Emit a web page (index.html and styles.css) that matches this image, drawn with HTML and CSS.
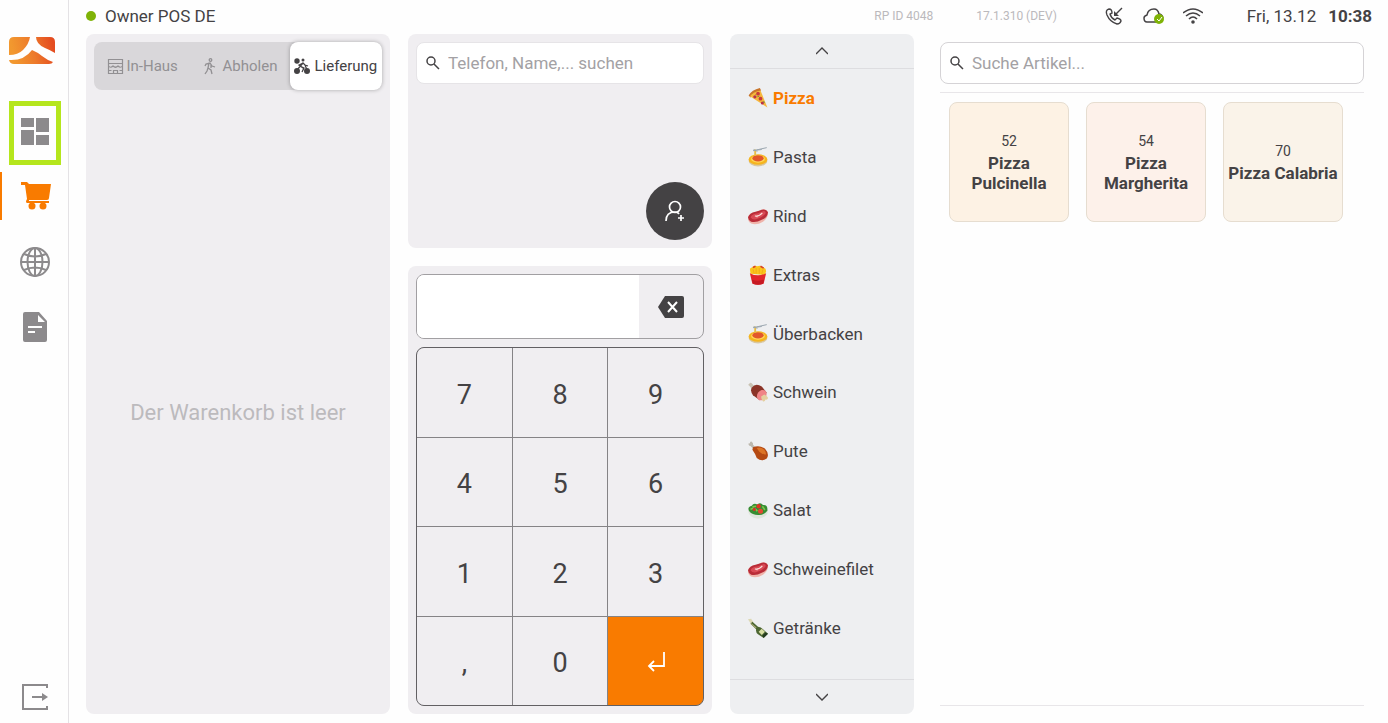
FILE: index.html
```html
<!DOCTYPE html>
<html lang="de">
<head>
    <meta charset="UTF-8">
    <title>Owner POS DE</title>
    <meta name="viewport" content="width=device-width, initial-scale=1.0">
    <link rel="stylesheet" href="styles.css">
</head>
<body>
    <!-- food icons used by the category list -->
    <svg class="sprite" aria-hidden="true">
        <symbol id="pizza" viewBox="0 0 32 32">
            <path d="M1 12Q6 3 19 0l2 4Q10 8 4 15z" fill="#c8742a"/>
            <path d="M3 13Q9 6 20 4l11 27z" fill="#f6b73c"/>
            <circle cx="16" cy="9" r="3" fill="#c93a3a"/>
            <circle cx="11" cy="14" r="2.600" fill="#b9304a"/>
            <circle cx="20" cy="17" r="3" fill="#c93a3a"/>
            <circle cx="23" cy="24" r="2.500" fill="#b9304a"/>
            <path d="M15 14l3-1M12 10l1 1M25 21l1 3" stroke="#6e8b3a" stroke-width="1.500"/>
        </symbol>
        <symbol id="pasta" viewBox="0 0 32 32">
            <ellipse cx="16" cy="22" rx="15" ry="9" fill="#d9c7a0"/>
            <ellipse cx="16" cy="20" rx="15" ry="8.500" fill="#f5b51f"/>
            <ellipse cx="16" cy="19" rx="11" ry="6" fill="#ffd75a"/>
            <ellipse cx="16" cy="18" rx="9" ry="5" fill="#e2572b"/>
            <path d="M10 14V4h3v10" fill="#e6bd4a"/>
            <path d="M8 6l22-5M9 4l6 3M14 5l8-1" stroke="#9ba7b0" stroke-width="1.600" fill="none"/>
        </symbol>
        <symbol id="steak" viewBox="0 0 32 32">
            <path d="M0 19Q0 12 12 10Q17 9 21 6Q29 3 32 9Q33 19 24 25Q14 31 5 28Q0 25 0 19z" fill="#efb4ab"/>
            <path d="M0 18Q2 11 12 9Q18 8 22 6Q29 4 32 10Q31 19 22 22Q13 27 5 25Q0 22 0 18z" fill="#b92c38"/>
            <path d="M4 18Q7 12 15 12Q20 10 25 8Q29 8 28 12Q24 18 16 20Q8 24 4 18z" fill="#d94a55"/>
            <path d="M11 16Q18 17 23 11M16 15l-2 3" stroke="#fbe0db" stroke-width="1.800" fill="none"/>
        </symbol>
        <symbol id="fries" viewBox="0 0 32 32">
            <path d="M4 14L3 6l4-3 4-2 4 1 4-1 5 2 4 3 1 4-2 6z" fill="#fbc51b"/>
            <path d="M8 4l4-2M20 2l5 3" stroke="#d8402a" stroke-width="2.500"/>
            <path d="M8 7l2 7M13 5v9M18 5v9M24 7l-2 7" stroke="#f0a318" stroke-width="1.200"/>
            <path d="M3 13q13 7 26 0l-4 17q-9 3-18 0z" fill="#e3262b"/>
            <path d="M6 23q10 4 20 0l-2 7q-8 3-16 0z" fill="#c61a23"/>
        </symbol>
        <symbol id="ham" viewBox="0 0 32 32">
            <path d="M2 6q-3-2 0-3q1-3 4-1l5 6-4 4z" fill="#c9c2b3"/>
            <path d="M6 9Q12 1 22 7L30 17L19 29L8 21Q3 14 6 9z" fill="#8b3428"/>
            <ellipse cx="22" cy="21" rx="7" ry="9" transform="rotate(36 22 21)" fill="#f08487"/>
            <path d="M21 23l5-3q6 3 6 6q-1 3-4 2q-1 4-4 3q-3-3-3-8z" fill="#e4cf9f"/>
        </symbol>
        <symbol id="poultry" viewBox="0 0 32 32">
            <path d="M1 6Q0 3 3 4Q3 0 6 1q3 2 2 5l5 5-3 3-6-6q-2 0-3-2z" fill="#bcb8ae"/>
            <path d="M8 10Q18 6 27 12Q35 21 30 28Q22 34 14 27Q12 21 7 14z" fill="#b54a13"/>
            <path d="M14 11Q21 9 26 14Q30 19 28 22Q22 20 18 17z" fill="#dc7426"/>
        </symbol>
        <symbol id="salad" viewBox="0 0 32 32">
            <path d="M0 16h32q0 12-16 14Q0 28 0 16z" fill="#dfe5dc"/>
            <path d="M2 18Q-2 11 6 9Q9 4 15 7Q20 3 24 8Q32 7 31 17Q25 25 16 24Q7 24 2 18z" fill="#368d32"/>
            <path d="M4 15q6-4 11 3M23 10l4 6M7 11l6-1" stroke="#80c34b" stroke-width="2.500" fill="none"/>
            <circle cx="17" cy="10" r="3.500" fill="#df3424"/>
            <circle cx="20" cy="18" r="4" fill="#e44832"/>
            <circle cx="10" cy="15" r="2.500" fill="#cf3427"/>
        </symbol>
        <symbol id="bottle" viewBox="0 0 32 32">
            <path d="M0 2l5-1 4 6-4 3z" fill="#dcd8b4"/>
            <path d="M4 9l3-3 9 8q5 0 8 4l8 7-7 7-9-6q-4-3-3-8z" fill="#4c6632"/>
            <path d="M17 22l5-5 5 5-5 5z" fill="#d9dfa4"/>
            <path d="M23 28l5-5 4 2-7 7z" fill="#243a20"/>
            <path d="M5 9l8 7" stroke="#a5a873" stroke-width="2"/>
        </symbol>
    </svg>

    <nav class="sidebar">
        <svg class="logo" viewBox="0 0 46 27" aria-hidden="true">
            <defs>
                <linearGradient id="sun" gradientUnits="userSpaceOnUse" x1="4" y1="16" x2="44" y2="8">
                    <stop offset="0" stop-color="#f2982f"/>
                    <stop offset="0.500" stop-color="#ed7a2b"/>
                    <stop offset="1" stop-color="#e44c20"/>
                </linearGradient>
            </defs>
            <g fill="url(#sun)">
                <path d="M5 0h16Q20 7 14 13Q9 18 0 18V5Q0 0 5 0z"/>
                <path d="M27 0h14q5 0 5 5v11Q41 13 36 11Q27 7 27 0z"/>
                <path d="M0 23Q15 24 23 13Q28 15 33 19Q38 23 44 25Q43 27 40 27H5Q1 27 0 23z"/>
            </g>
        </svg>
        <button class="nav-item marked" aria-label="Übersicht">
            <svg width="28" height="27" viewBox="0 0 28 27"><path d="M0 0h13v9H0zM15 0h13v14H15zM0 12h13v15H0zM15 17h13v10H15z"/></svg>
        </button>
        <button class="nav-item active" aria-label="Warenkorb">
            <svg width="30" height="28" viewBox="0 0 30 28"><path d="M0 0h6l2 2h22l-2 14q0 2-2 2H8v1h20v2H6q-2-1 0-4L4 3H0z"/><circle cx="11" cy="24" r="3.500"/><circle cx="22" cy="24" r="3.500"/></svg>
        </button>
        <button class="nav-item" aria-label="Online">
            <svg class="line" width="30" height="30" viewBox="0 0 30 30" stroke-width="2"><circle cx="15" cy="15" r="14"/><ellipse cx="15" cy="15" rx="7.500" ry="14"/><path d="M15 1v28M1 15h28M4 7q11 5 22 0M4 23q11-5 22 0"/></svg>
        </button>
        <button class="nav-item" aria-label="Belege">
            <svg width="24" height="30" viewBox="0 0 24 30"><path fill-rule="evenodd" d="M2 0h14l8 9v19q0 2-2 2H2q-2 0-2-2V2q0-2 2-2zM15 3v7h7zM5 14v2h14v-2zM5 19v2h7v-2z"/></svg>
        </button>
        <button class="nav-item logout" aria-label="Abmelden">
            <svg class="line" width="26" height="26" viewBox="0 0 26 26" stroke-width="2"><path d="M25 4V1H1v24h24v-3M10 13h14"/><path d="M20 9l6 4-6 4z" fill="#8c8a8c" stroke="none"/></svg>
        </button>
    </nav>

    <div class="page">
        <header class="topbar">
            <span class="status-dot"></span>
            <span class="shop">Owner POS DE</span>
            <span class="meta">RP ID 4048</span>
            <span class="meta version">17.1.310 (DEV)</span>
            <svg class="line top-icon" width="18" height="18" viewBox="0 0 18 18" stroke-width="1.400"><path d="M4 2Q0 3 2 8Q5 15 12 17Q15 17 16 14Q16 12 12 11L10 13Q6 11 5 7L7 6Q7 2 4 2zM17 1l-7 7"/><path d="M9 9V4l5 5z" fill="#444244" stroke="none"/></svg>
            <svg class="top-icon cloud" width="22" height="16" viewBox="0 0 22 16"><path d="M13 14H4Q1 14 1 10Q1 8 4 7Q5 1 11 1Q15 1 16 6Q19 6 20 10" fill="none" stroke="#444244" stroke-width="1.500"/><circle cx="16" cy="11" r="5" fill="#7fb307"/><path d="M14 11l2 2 3-4" fill="none" stroke="#fff"/></svg>
            <svg class="line top-icon" width="20" height="16" viewBox="0 0 20 16" stroke-width="1.600"><path d="M0 5Q10-3 20 5M3 8Q10 2 17 8M6 11Q10 7 14 11"/><circle cx="10" cy="14" r="1" fill="#444244"/></svg>
            <span class="date">Fri, 13.12</span>
            <span class="time">10:38</span>
        </header>

        <main class="columns">
            <section class="panel basket">
                <div class="order-types">
                    <button class="order-type">
                        <svg class="line" width="17" height="17" viewBox="0 0 17 17" stroke-width="1.200"><path d="M1.500 1.500h14v4h-14zM1.500 5.500v10h14v-10M1.500 8q2 2.500 4.500 0q2.500 2.500 5 0q2.500 2.500 4.500 0M6.500 15.500v-3h4v3M1.500 12.500h3M12.500 12.500h3"/></svg>
                        In-Haus
                    </button>
                    <button class="order-type pickup">
                        <svg class="line" width="12" height="17" viewBox="0 0 12 17" stroke-width="1.300"><circle cx="6.500" cy="2" r="1.300"/><path d="M1 8l1-2 4-1 2 3 3 1M5 5l-1 5 3 2 1 4M4 10l-1 3-2 3M7 6v4"/></svg>
                        Abholen
                    </button>
                    <button class="order-type selected">
                        <svg width="16" height="16" viewBox="0 0 16 16"><circle cx="3" cy="3" r="2.700"/><circle cx="3" cy="13" r="3"/><circle cx="13" cy="13" r="3"/><circle cx="9" cy="2" r="1.500"/><path d="M3 12l6-7 2 2 3 1M6 8l4 2-2 4M9 5L5 7l4 3M11 7l2 5" fill="none" stroke="#444244" stroke-width="1.300"/></svg>
                        Lieferung
                    </button>
                </div>
                <p class="empty">Der Warenkorb ist leer</p>
            </section>

            <div class="middle">
                <section class="panel customer">
                    <label class="search">
                        <svg class="line" width="14" height="14" viewBox="0 0 14 14" stroke-width="1.500"><circle cx="5" cy="5" r="4"/><path d="M8 8l5 5"/></svg>
                        <input type="search" placeholder="Telefon, Name,... suchen" aria-label="Kunde suchen">
                    </label>
                    <button class="add-customer" aria-label="Kunde anlegen">
                        <svg width="20" height="22" viewBox="0 0 20 22"><path d="M1 21Q1 12 10 12Q13 12 14 14M16 15v6M13 18h6" fill="none" stroke="#fff" stroke-width="1.700"/><circle cx="10" cy="7" r="5.500" fill="none" stroke="#fff" stroke-width="1.700"/></svg>
                    </button>
                </section>

                <section class="panel numpad">
                    <div class="display">
                        <input type="text" aria-label="Eingabe">
                        <button aria-label="Löschen">
                            <svg width="26" height="22" viewBox="0 0 26 22"><path d="M7 0h17q2 0 2 2v18q0 2-2 2H7L0 11z"/><path d="M10 6l9 10M19 6l-9 10" stroke="#fff" stroke-width="2"/></svg>
                        </button>
                    </div>
                    <div class="keys">
                        <button>7</button>
                        <button>8</button>
                        <button>9</button>
                        <button>4</button>
                        <button>5</button>
                        <button>6</button>
                        <button>1</button>
                        <button>2</button>
                        <button>3</button>
                        <button>,</button>
                        <button>0</button>
                        <button class="enter" aria-label="Enter">
                            <svg width="18" height="20" viewBox="0 0 18 20"><path d="M17 0v14H2M7 9l-5 5 5 5" fill="none" stroke="#fff" stroke-width="1.800"/></svg>
                        </button>
                    </div>
                </section>
            </div>

            <section class="panel categories">
                <button class="scroll" aria-label="Nach oben">
                    <svg class="line" width="12" height="8" viewBox="0 0 12 8" stroke-width="1.400"><path d="M0 7l6-6 6 6"/></svg>
                </button>
                <ul>
                    <li><button class="category current"><svg><use href="#pizza"/></svg>Pizza</button></li>
                    <li><button class="category"><svg><use href="#pasta"/></svg>Pasta</button></li>
                    <li><button class="category"><svg><use href="#steak"/></svg>Rind</button></li>
                    <li><button class="category"><svg><use href="#fries"/></svg>Extras</button></li>
                    <li><button class="category"><svg><use href="#pasta"/></svg>Überbacken</button></li>
                    <li><button class="category"><svg><use href="#ham"/></svg>Schwein</button></li>
                    <li><button class="category"><svg><use href="#poultry"/></svg>Pute</button></li>
                    <li><button class="category"><svg><use href="#salad"/></svg>Salat</button></li>
                    <li><button class="category"><svg><use href="#steak"/></svg>Schweinefilet</button></li>
                    <li><button class="category"><svg><use href="#bottle"/></svg>Getränke</button></li>
                </ul>
                <button class="scroll" aria-label="Nach unten">
                    <svg class="line" width="12" height="8" viewBox="0 0 12 8" stroke-width="1.400"><path d="M0 1l6 6 6-6"/></svg>
                </button>
            </section>

            <section class="articles">
                <label class="search outlined">
                    <svg class="line" width="14" height="14" viewBox="0 0 14 14" stroke-width="1.500"><circle cx="5" cy="5" r="4"/><path d="M8 8l5 5"/></svg>
                    <input type="search" placeholder="Suche Artikel..." aria-label="Artikel suchen">
                </label>
                <div class="article-list">
                    <button class="article"><span>52</span><strong>Pizza Pulcinella</strong></button>
                    <button class="article rose"><span>54</span><strong>Pizza Margherita</strong></button>
                    <button class="article sand"><span>70</span><strong>Pizza Calabria</strong></button>
                </div>
            </section>
        </main>
    </div>
</body>
</html>
```
FILE: styles.css
```css
* {
    box-sizing: border-box;
}

body {
    margin: 0;
    min-height: 100vh;
    display: flex;
    background-color: #fefefe;
    color: #444244;
    font-family: Roboto, "Liberation Sans", sans-serif;
    font-size: 17px;
}

button, input {
    font: inherit;
    color: inherit;
    margin: 0;
    padding: 0;
    border: none;
    background: none;
}

button {
    cursor: pointer;
}

svg {
    flex: none;
    fill: #444244;
}

.line {
    fill: none;
    stroke: #444244;
}

.sprite {
    position: absolute;
    width: 0;
    height: 0;
}

/* sidebar */
.sidebar {
    width: 69px;
    flex: none;
    display: flex;
    flex-direction: column;
    gap: 1px;
    padding: 37px 0 0;
    border-right: 1px solid #e4e2e5;
}

.logo {
    width: 46px;
    height: 27px;
    margin: 0 0 36px 9px;
}

.nav-item {
    height: 64px;
    width: 52px;
    margin-left: 9px;
    display: flex;
    align-items: center;
    justify-content: center;
}

.nav-item svg {
    fill: #8c8a8c;
}

.nav-item .line {
    fill: none;
    stroke: #8c8a8c;
}

.nav-item.marked {
    border: 5px solid #b5e61d;
    padding-bottom: 4px;
}

.nav-item.active {
    width: 61px;
    height: 48px;
    margin: 6px 0 9px;
    padding-left: 8px;
    border-left: 2px solid #f97b00;
}

.nav-item.active svg {
    fill: #f97b00;
}

.logout {
    height: 52px;
    margin-top: auto;
}

/* top bar */
.page {
    flex: 1;
    min-width: 0;
    display: flex;
    flex-direction: column;
    padding: 0 24px 9px 17px;
}

.topbar {
    height: 34px;
    display: flex;
    align-items: center;
    margin-right: -8px;
    padding-bottom: 2px;
}

.status-dot {
    width: 10px;
    height: 10px;
    border-radius: 50%;
    background-color: #7fb307;
    margin-right: 9px;
}

.shop {
    flex: 1;
}

.meta {
    font-size: 12px;
    color: #bbb9bc;
}

.version {
    margin: 0 48px 0 43px;
}

.top-icon {
    margin-right: 20px;
}

.cloud {
    margin-right: 18px;
}

.date {
    margin: 0 12px 0 24px;
}

.time {
    font-weight: bold;
}

/* columns */
.columns {
    flex: 1;
    display: grid;
    grid-template-columns: minmax(0, 304fr) minmax(0, 304fr) minmax(0, 184fr) minmax(0, 432fr);
    gap: 18px;
}

.panel {
    background-color: #f0eef1;
    border-radius: 8px;
}

.basket {
    display: flex;
    flex-direction: column;
    padding: 8px;
}

.order-types {
    display: grid;
    grid-template-columns: 97fr 98fr 92fr;
    height: 48px;
    border-radius: 8px;
    background-color: #d9d7da;
}

.order-type {
    display: flex;
    align-items: center;
    justify-content: center;
    gap: 2px;
    font-size: 15px;
    color: #929093;
}

.order-type .line {
    stroke: #929093;
}

.order-type.pickup {
    gap: 7px;
}

.order-type.selected {
    gap: 4px;
    border-radius: 8px;
    background-color: #fff;
    color: #444244;
    box-shadow: 0 0 4px rgba(0, 0, 0, 0.3);
}

.empty {
    margin: auto;
    padding-top: 28px;
    font-size: 22px;
    color: #bcbabd;
}

.middle {
    display: grid;
    grid-template-columns: minmax(0, 1fr);
    grid-template-rows: 214fr 448fr;
    gap: 18px;
}

.customer {
    display: flex;
    flex-direction: column;
    justify-content: space-between;
    padding: 8px;
}

.search {
    display: flex;
    align-items: center;
    gap: 8px;
    height: 42px;
    padding: 0 9px;
    border: 1px solid #e6e4e7;
    border-radius: 8px;
    background-color: #fff;
}

.search input {
    flex: 1;
    min-width: 0;
    outline: none;
}

.search input::placeholder {
    color: #a3a1a4;
}

.add-customer {
    display: flex;
    align-items: center;
    justify-content: center;
    align-self: flex-end;
    width: 58px;
    height: 58px;
    border-radius: 50%;
    background-color: #444244;
}

.numpad {
    display: flex;
    flex-direction: column;
    gap: 8px;
    padding: 8px;
}

.display {
    display: flex;
    height: 65px;
    border: 1px solid #a19fa2;
    border-radius: 8px;
    overflow: hidden;
}

.display input {
    flex: 1;
    min-width: 0;
    padding: 0 12px;
    background-color: #fff;
}

.display button {
    width: 64px;
    display: flex;
    align-items: center;
    justify-content: center;
}

.keys {
    flex: 1;
    display: grid;
    grid-template-columns: repeat(3, 1fr);
    grid-template-rows: repeat(4, 1fr);
    gap: 1px;
    border: 1px solid #626063;
    border-radius: 8px;
    background-color: #858386;
    overflow: hidden;
}

.keys button {
    padding-top: 5px;
    background-color: #f0eef1;
    font-size: 27px;
}

.keys .enter {
    background-color: #f97b00;
}

/* categories */
.categories {
    display: flex;
    flex-direction: column;
    background-color: #eeeff1;
}

.scroll {
    height: 34px;
    display: flex;
    align-items: center;
    justify-content: center;
}

.categories ul {
    flex: 1;
    display: flex;
    flex-direction: column;
    list-style: none;
    margin: 0;
    padding: 0 0 22px;
    border-top: 1px solid #dddde0;
    border-bottom: 1px solid #dddde0;
}

.categories li {
    flex: 1;
    display: flex;
}

.category {
    flex: 1;
    display: flex;
    align-items: center;
    gap: 5px;
    padding-left: 18px;
    text-align: left;
}

.category svg {
    width: 20px;
    height: 20px;
}

.category.current {
    color: #f97b00;
    font-weight: bold;
}

/* articles */
.articles {
    display: flex;
    flex-direction: column;
    padding: 8px 0 8px 8px;
}

.outlined {
    border-color: #d5d3d6;
    margin-bottom: 8px;
}

.article-list {
    flex: 1;
    display: flex;
    flex-wrap: wrap;
    align-content: flex-start;
    gap: 17px;
    padding: 9px;
    border-top: 1px solid #e8e6e9;
    border-bottom: 1px solid #e8e6e9;
}

.article {
    width: 120px;
    height: 120px;
    display: flex;
    flex-direction: column;
    align-items: center;
    justify-content: center;
    gap: 2px;
    border: 1px solid #e6ddd0;
    border-radius: 8px;
    background-color: #fdf2e4;
    line-height: 20px;
}

.article.rose {
    background-color: #fdf1ea;
}

.article.sand {
    background-color: #faf3e9;
}

.article span {
    font-size: 14px;
}
```
